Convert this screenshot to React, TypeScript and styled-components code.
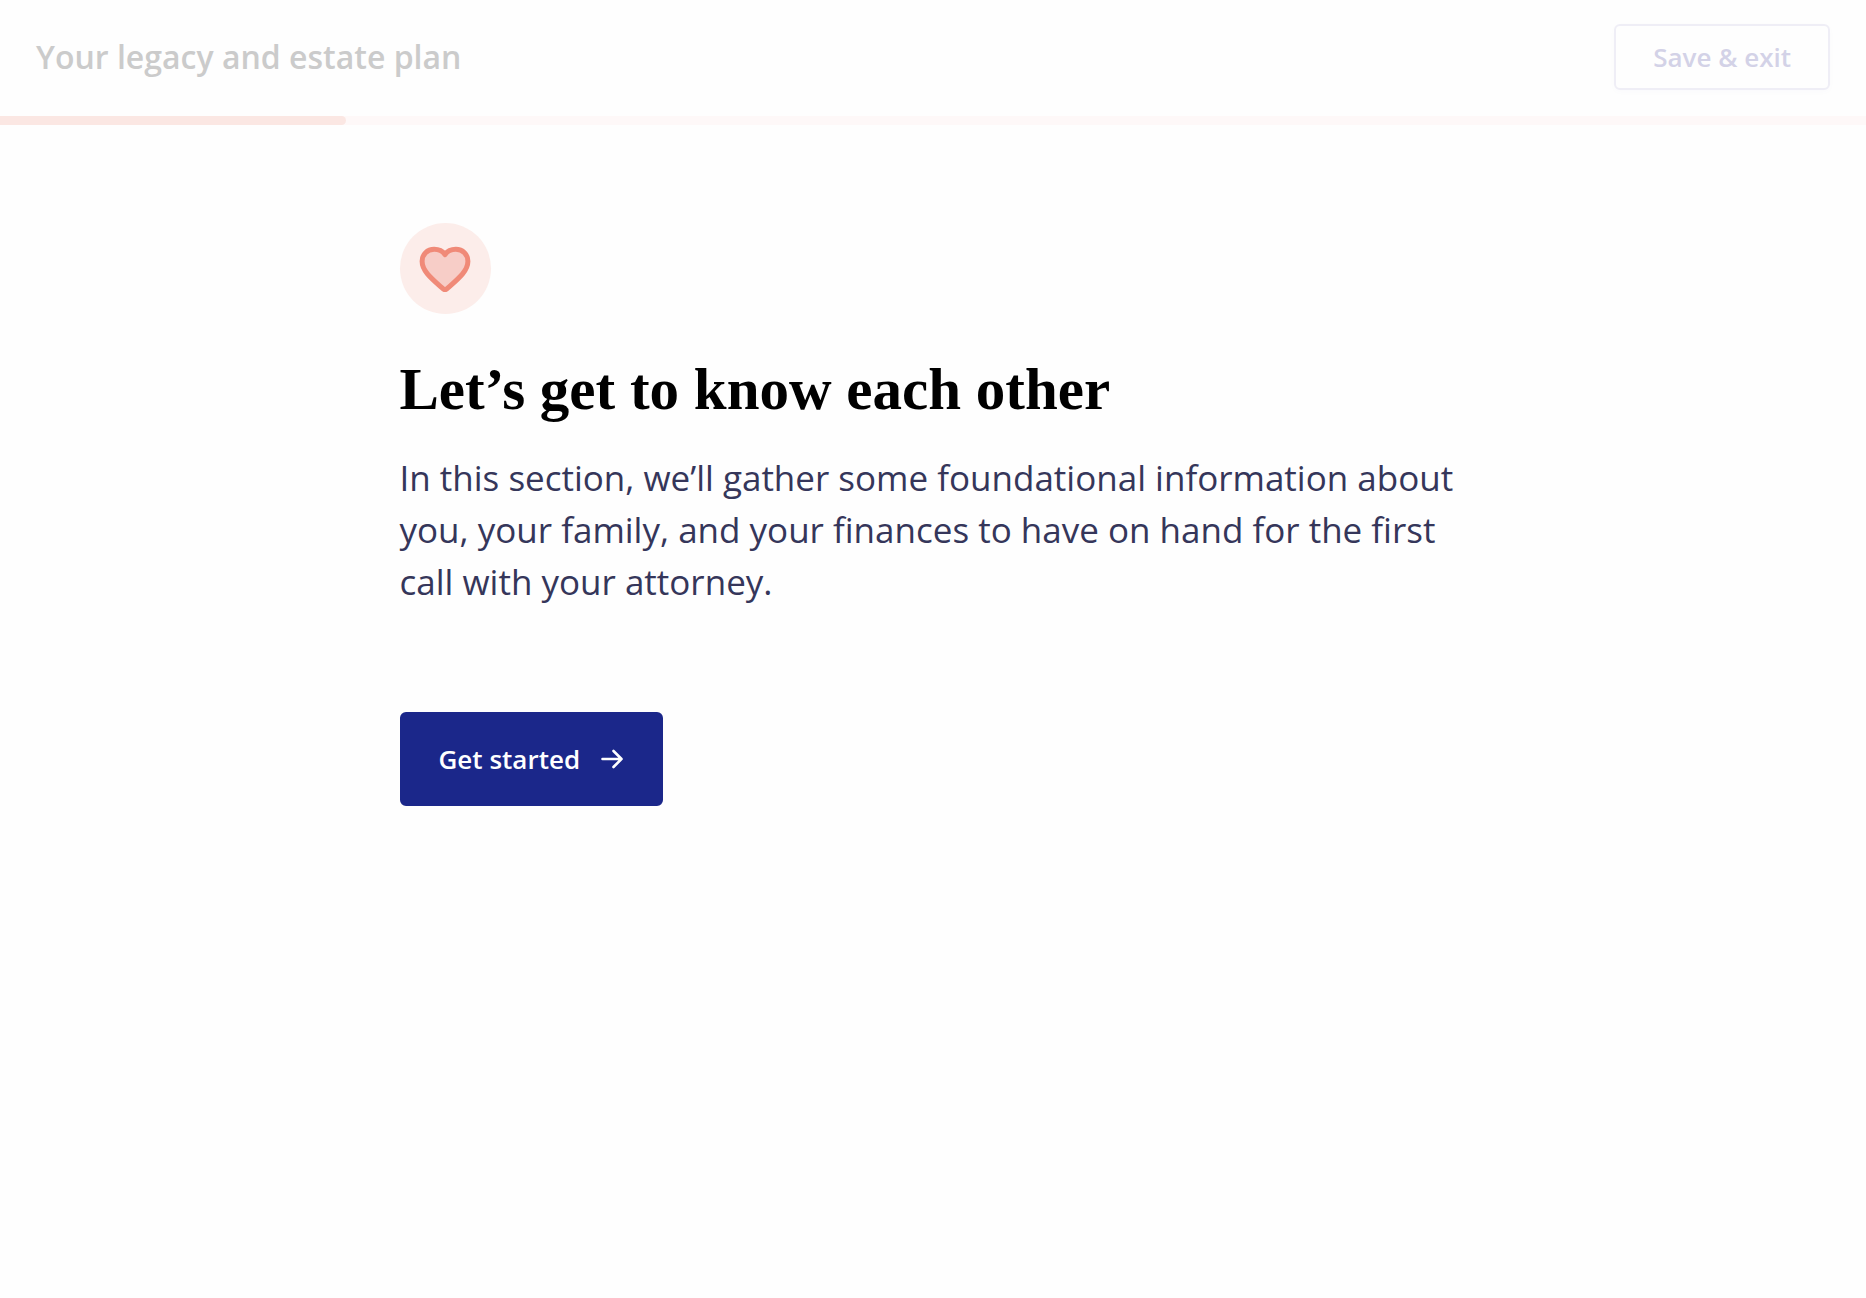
import React from "react";
import styled, { createGlobalStyle } from "styled-components";

const sans = `"Open Sans", "Noto Sans", sans-serif`;
const serif = `"Liberation Serif", "Times New Roman", serif`;

const GlobalStyle = createGlobalStyle`
  *, *::before, *::after { box-sizing: border-box; }
  body { margin: 0; background: #fefefe; font-family: ${sans}; }
`;

const Page = styled.div`
  min-height: 100vh;
  display: flex;
  flex-direction: column;
`;

const Header = styled.header`
  display: flex;
  align-items: center;
  justify-content: space-between;
  padding: 24px 36px 26px;
`;

const PlanTitle = styled.h2`
  margin: 0;
  font-size: 32px;
  font-weight: 600;
  line-height: 44px;
  color: #cbcbcb;
`;

const Button = styled.button<{ $primary?: boolean }>`
  display: inline-flex;
  align-items: center;
  justify-content: center;
  gap: 21px;
  height: ${(p) => (p.$primary ? "94px" : "66px")};
  padding: 0 37px;
  border: 2px solid ${(p) => (p.$primary ? "#1b278a" : "#efeef6")};
  border-radius: 6px;
  background: ${(p) => (p.$primary ? "#1b278a" : "#fefefe")};
  color: ${(p) => (p.$primary ? "#ffffff" : "#d3d2e7")};
  box-shadow: ${(p) => (p.$primary ? "none" : "0 2px 6px rgba(27, 39, 138, 0.02)")};
  font-family: inherit;
  font-size: 26px;
  font-weight: 600;
  line-height: 36px;
  cursor: pointer;
`;

const Track = styled.div`
  height: 9px;
  background: #fef8f8;
`;

const Fill = styled.div`
  height: 100%;
  border-radius: 0 5px 5px 0;
  background: #fbe7e3;
`;

const Main = styled.main`
  display: flex;
  flex-direction: column;
  align-items: flex-start;
  width: 100%;
  max-width: 1067px;
  margin: 0 auto;
  padding-top: 98px;
`;

const Badge = styled.div`
  display: flex;
  align-items: center;
  justify-content: center;
  width: 91px;
  height: 91px;
  border-radius: 50%;
  background: #fcedea;
`;

const Heading = styled.h1`
  margin: 39px 0 0;
  font-family: ${serif};
  font-size: 59px;
  font-weight: 700;
  line-height: 72px;
  color: #000000;
`;

const Intro = styled.p`
  margin: 27px 0 0;
  font-size: 35px;
  line-height: 52px;
  color: #35365a;
`;

const Actions = styled.div`
  margin-top: 104px;
`;

function HeartIcon() {
  return (
    <svg width="52" height="46" viewBox="0 0 52 46" fill="none" aria-hidden="true">
      <path
        d="M26 8.6C23.4 4.9 19.2 3.3 15.2 3.3C8.2 3.3 3.1 8.4 3.1 15.2C3.1 25 12.5 32.5 24.2 42.9C25.3 43.8 26.7 43.8 27.8 42.9C39.5 32.5 48.9 25 48.9 15.2C48.9 8.4 43.8 3.3 36.8 3.3C32.8 3.3 28.6 4.9 26 8.6Z"
        fill="#f7cdc7"
        stroke="#f08a78"
        strokeWidth="5"
        strokeLinejoin="round"
      />
    </svg>
  );
}

function ArrowIcon() {
  return (
    <svg width="23" height="20" viewBox="0 0 23 20" fill="none" aria-hidden="true">
      <path
        d="M1.5 10H20.5M12.5 2L20.5 10L12.5 18"
        stroke="currentColor"
        strokeWidth="2.6"
        strokeLinecap="round"
        strokeLinejoin="round"
      />
    </svg>
  );
}

export default function App() {
  const progress = 18.55;
  return (
    <Page>
      <GlobalStyle />
      <Header>
        <PlanTitle>Your legacy and estate plan</PlanTitle>
        <Button type="button">Save &amp; exit</Button>
      </Header>
      <Track role="progressbar" aria-label="Plan progress" aria-valuenow={progress} aria-valuemin={0} aria-valuemax={100}>
        <Fill style={{ width: `${progress}%` }} />
      </Track>
      <Main>
        <Badge>
          <HeartIcon />
        </Badge>
        <Heading>Let’s get to know each other</Heading>
        <Intro>
          In this section, we’ll gather some foundational information about you, your family, and your finances to
          have on hand for the first call with your attorney.
        </Intro>
        <Actions>
          <Button type="button" $primary>
            Get started
            <ArrowIcon />
          </Button>
        </Actions>
      </Main>
    </Page>
  );
}
